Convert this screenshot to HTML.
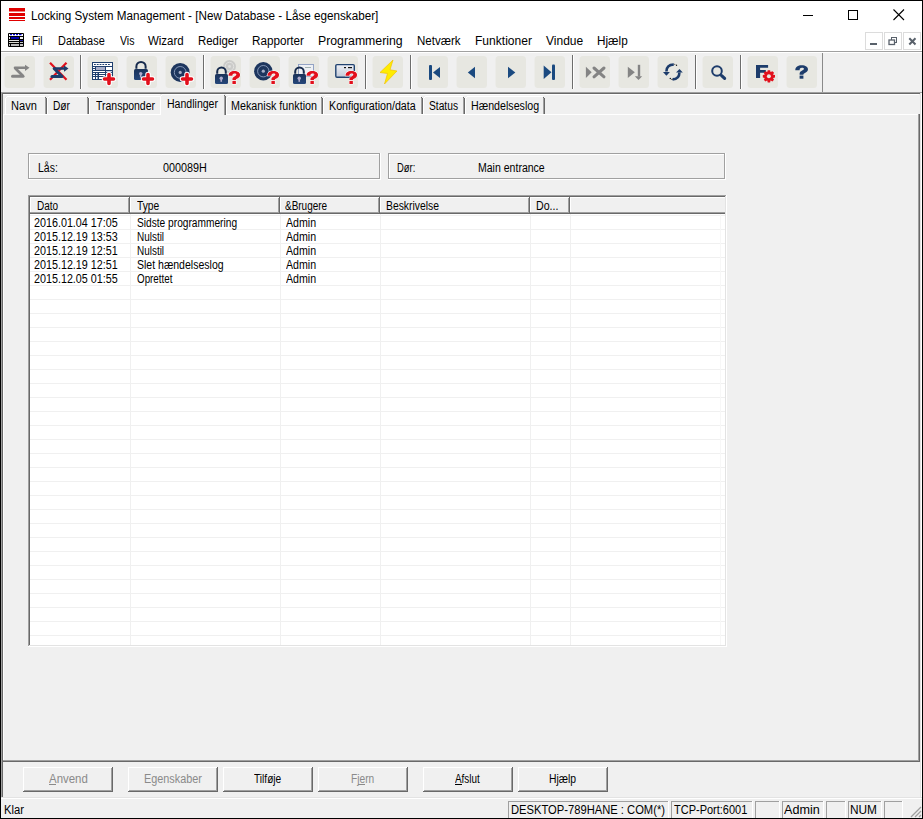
<!DOCTYPE html>
<html><head><meta charset="utf-8"><style>
html,body{margin:0;padding:0;}
body{width:923px;height:819px;overflow:hidden;position:relative;background:#f0f0f0;font-family:"Liberation Sans", sans-serif;}
body>div,body>span{position:absolute;}
body>span{white-space:pre;transform-origin:0 0;}
</style></head><body>
<div style="left:0px;top:0px;width:923px;height:51px;background:#fff;"></div>
<svg style="position:absolute;left:9px;top:8px" width="16" height="14" viewBox="0 0 16 14"><rect x="0" y="0" width="16" height="3.5" fill="#e00000"/><rect x="0" y="5" width="16" height="3" fill="#e00000"/><rect x="0" y="9" width="16" height="2" fill="#e00000"/><rect x="0" y="12" width="16" height="1" fill="#e00000"/></svg>
<div style="left:803px;top:15px;width:10px;height:1px;background:#000;"></div>
<div style="left:848px;top:10px;width:10px;height:10px;background:transparent;box-sizing:border-box;border:1px solid #000"></div>
<svg style="position:absolute;left:893px;top:9px" width="12" height="12" viewBox="0 0 12 12"><path d="M0.5 0.5 L11 11 M11 0.5 L0.5 11" stroke="#000" stroke-width="1.1"/></svg>
<svg style="position:absolute;left:8px;top:33px" width="16" height="14" viewBox="0 0 16 14"><rect width="16" height="14" rx="1" fill="#000"/><rect x="1" y="1" width="14" height="2" fill="#fff"/><rect x="2" y="1" width="2" height="1.2" fill="#0000d0"/><rect x="5" y="1" width="2" height="1.2" fill="#0000d0"/><rect x="8" y="1" width="2" height="1.2" fill="#0000d0"/><rect x="11" y="1" width="2.5" height="1.2" fill="#0000d0"/><rect x="1" y="4" width="1" height="2" fill="#e8e8f0"/><rect x="3" y="4" width="8" height="2" fill="#0000b0"/><rect x="12" y="4" width="3" height="2" fill="#f0f0f0"/><rect x="1" y="7" width="10" height="1" fill="#e0e0e0"/><rect x="12" y="7" width="3" height="1" fill="#2020a0"/><rect x="1" y="9" width="10" height="1" fill="#d8d8d0"/><rect x="12" y="9" width="3" height="1" fill="#c8c8c8"/><rect x="1" y="11" width="1" height="2" fill="#c0c0c0"/><rect x="3" y="11" width="8" height="2" fill="#b8b8b8"/><rect x="12" y="11" width="3" height="2" fill="#c0c0c0"/></svg>
<div style="left:865px;top:32px;width:18px;height:18px;background:transparent;box-sizing:border-box;border:1px solid #dcdcdc"></div>
<div style="left:884px;top:32px;width:18px;height:18px;background:transparent;box-sizing:border-box;border:1px solid #dcdcdc"></div>
<div style="left:903px;top:32px;width:18px;height:18px;background:transparent;box-sizing:border-box;border:1px solid #dcdcdc"></div>
<div style="left:870px;top:43px;width:7px;height:2px;background:#59616b;"></div>
<svg style="position:absolute;left:884px;top:32px" width="18" height="18" viewBox="0 0 18 18"><rect x="7.5" y="5.5" width="5" height="5" fill="none" stroke="#59616b" stroke-width="1"/><rect x="5" y="8" width="5.5" height="4.5" fill="#fff" stroke="#59616b" stroke-width="1.3"/></svg>
<svg style="position:absolute;left:903px;top:32px" width="18" height="18" viewBox="0 0 18 18"><path d="M6.3 6.3 L12.5 12.5 M12.5 6.3 L6.3 12.5" stroke="#59616b" stroke-width="2"/></svg>
<div style="left:1px;top:51px;width:921px;height:1px;background:#a0a0a0;"></div>
<div style="left:1px;top:52px;width:921px;height:1px;background:#ffffff;"></div>
<div style="left:1px;top:53px;width:921px;height:39px;background:#f0f0f0;"></div>
<svg style="position:absolute;left:4px;top:56px" width="32" height="32" viewBox="0 0 32 32"><rect x="0.5" y="0" width="30.5" height="32" rx="3.5" fill="#e7e7e1"/><path d="M11 11.8 H22" stroke="#848484" stroke-width="2.6" stroke-linecap="round"/><path d="M21 8.8 L25.5 11.8 L21 15 Z" fill="#848484"/><path d="M11.5 12.5 L18.5 19.5" stroke="#848484" stroke-width="2.8" stroke-linecap="round"/><path d="M8.5 20.3 H19" stroke="#848484" stroke-width="3" stroke-linecap="round"/></svg>
<svg style="position:absolute;left:43px;top:56px" width="32" height="32" viewBox="0 0 32 32"><rect x="0.5" y="0" width="30.5" height="32" rx="3.5" fill="#e7e7e1"/><path d="M7 6.8 L23.5 23.8 M23.5 6.8 L7 23.8" stroke="#e2101c" stroke-width="2.2"/><path d="M11 12.5 H22" stroke="#1d3c6b" stroke-width="2.6" stroke-linecap="round"/><path d="M21 9.5 L25.5 12.5 L21 15.8 Z" fill="#1d3c6b"/><path d="M11.5 13 L18.5 20" stroke="#1d3c6b" stroke-width="2.8" stroke-linecap="round"/><path d="M9 20.6 H19" stroke="#1d3c6b" stroke-width="3" stroke-linecap="round"/></svg>
<svg style="position:absolute;left:87px;top:56px" width="32" height="32" viewBox="0 0 32 32"><rect x="0.5" y="0" width="30.5" height="32" rx="3.5" fill="#e7e7e1"/><rect x="5" y="6" width="21" height="18" fill="#1f3f6e"/><rect x="6" y="7" width="19" height="3" fill="#fff"/><rect x="7.0" y="8" width="1.8" height="1" fill="#1f3f6e"/><rect x="9.8" y="8" width="1.8" height="1" fill="#1f3f6e"/><rect x="12.6" y="8" width="1.8" height="1" fill="#1f3f6e"/><rect x="15.399999999999999" y="8" width="1.8" height="1" fill="#1f3f6e"/><rect x="18.2" y="8" width="1.8" height="1" fill="#1f3f6e"/><rect x="21.0" y="8" width="1.8" height="1" fill="#1f3f6e"/><rect x="6" y="11" width="2" height="1" fill="#fff"/><rect x="6" y="13" width="2" height="1" fill="#fff"/><rect x="9" y="11" width="9" height="3" fill="#a8aec8"/><rect x="19" y="11" width="6" height="3" fill="#fff"/><rect x="6" y="15" width="12" height="1" fill="#fff"/><rect x="19" y="15" width="6" height="1" fill="#c8cce0"/><rect x="6" y="17" width="2" height="1" fill="#fff"/><rect x="9" y="17" width="1.5" height="1" fill="#fff"/><rect x="12" y="17" width="6" height="1" fill="#fff"/><rect x="19" y="17" width="6" height="1" fill="#fff"/><rect x="6" y="19" width="2" height="1" fill="#fff"/><rect x="9" y="19" width="1.5" height="1" fill="#fff"/><rect x="12" y="19" width="6" height="1" fill="#fff"/><rect x="19" y="19" width="6" height="1" fill="#fff"/><rect x="6" y="21" width="2" height="2" fill="#fff"/><rect x="9" y="21" width="1.5" height="2" fill="#fff"/><rect x="12" y="21" width="6" height="2" fill="#fff"/><path d="M22 18.5 V27.5 M17.5 23 H26.5" stroke="#fff" stroke-width="5.5" stroke-linecap="round"/><path d="M22 18.5 V27.5 M17.5 23 H26.5" stroke="#e2101c" stroke-width="3.6" stroke-linecap="round"/></svg>
<svg style="position:absolute;left:126px;top:56px" width="32" height="32" viewBox="0 0 32 32"><rect x="0.5" y="0" width="30.5" height="32" rx="3.5" fill="#e7e7e1"/><path d="M10.38 12.70 V10.58 A4.62 4.62 0 0 1 19.62 10.58 V12.70" fill="none" stroke="#162a4c" stroke-width="2"/><defs><linearGradient id="lg813" x1="0" y1="0" x2="0" y2="1"><stop offset="0" stop-color="#1a3258"/><stop offset="1" stop-color="#25477a"/></linearGradient></defs><rect x="8" y="13" width="14" height="11" rx="1.5" fill="url(#lg813)"/><circle cx="14.72" cy="17.62" r="1.7" fill="#b0accc"/><rect x="13.92" y="17.95" width="1.6" height="3.63" fill="#b0accc"/><path d="M22 18.5 V27.5 M17.5 23 H26.5" stroke="#fff" stroke-width="5.5" stroke-linecap="round"/><path d="M22 18.5 V27.5 M17.5 23 H26.5" stroke="#e2101c" stroke-width="3.6" stroke-linecap="round"/></svg>
<svg style="position:absolute;left:165px;top:56px" width="32" height="32" viewBox="0 0 32 32"><rect x="0.5" y="0" width="30.5" height="32" rx="3.5" fill="#e7e7e1"/><circle cx="15.2" cy="16.4" r="9.5" fill="#1d365e"/><circle cx="15.2" cy="16.4" r="5.89" fill="none" stroke="#8ea0c0" stroke-width="0.9"/><circle cx="15.2" cy="16.4" r="1.6" fill="#a8b0c8"/><path d="M22 18.5 V27.5 M17.5 23 H26.5" stroke="#fff" stroke-width="5.5" stroke-linecap="round"/><path d="M22 18.5 V27.5 M17.5 23 H26.5" stroke="#e2101c" stroke-width="3.6" stroke-linecap="round"/></svg>
<svg style="position:absolute;left:210px;top:56px" width="32" height="32" viewBox="0 0 32 32"><rect x="0.5" y="0" width="30.5" height="32" rx="3.5" fill="#e7e7e1"/><circle cx="19.5" cy="10.5" r="6.5" fill="#cbcbc9"/><circle cx="19.5" cy="10.5" r="4.2" fill="none" stroke="#e2e2e0" stroke-width="1"/><circle cx="19.5" cy="10.5" r="1.4" fill="#e2e2e0"/><path d="M7.21 17.70 V15.80 A4.29 4.29 0 0 1 15.79 15.80 V17.70" fill="none" stroke="#162a4c" stroke-width="2"/><defs><linearGradient id="lg518" x1="0" y1="0" x2="0" y2="1"><stop offset="0" stop-color="#1a3258"/><stop offset="1" stop-color="#25477a"/></linearGradient></defs><rect x="5" y="18" width="13" height="10" rx="1.5" fill="url(#lg518)"/><circle cx="11.24" cy="22.20" r="1.7" fill="#b0accc"/><rect x="10.44" y="22.50" width="1.6" height="3.30" fill="#b0accc"/><g transform="translate(18.4 15) scale(0.91 0.963) translate(-9.2 -9.2)" paint-order="stroke"><path d="M9.3 14.2 C9.3 10.8 12 9.2 15.6 9.2 C19.6 9.2 22 10.9 22 13.3 C22 15.6 20 16.5 18.6 17.2 C17.6 17.7 17.4 18.1 17.4 18.8 L13.6 18.8 L13.6 17.8 C13.6 16.2 14.6 15.5 16.2 14.6 C17.4 13.9 17.9 13.5 17.9 12.8 C17.9 12.1 17.1 11.8 15.9 11.8 C14.5 11.8 13.6 12.5 13.6 14.2 Z" fill="#e2101c" stroke="#fff" stroke-width="1.1"/><rect x="13.6" y="19.6" width="3.8" height="3.1" fill="#e2101c" stroke="#fff" stroke-width="1"/></g></svg>
<svg style="position:absolute;left:249px;top:56px" width="32" height="32" viewBox="0 0 32 32"><rect x="0.5" y="0" width="30.5" height="32" rx="3.5" fill="#e7e7e1"/><circle cx="14.3" cy="15.2" r="9.2" fill="#1d365e"/><circle cx="14.3" cy="15.2" r="5.704" fill="none" stroke="#8ea0c0" stroke-width="0.9"/><circle cx="14.3" cy="15.2" r="1.6" fill="#a8b0c8"/><g transform="translate(18.4 15) scale(0.91 0.963) translate(-9.2 -9.2)" paint-order="stroke"><path d="M9.3 14.2 C9.3 10.8 12 9.2 15.6 9.2 C19.6 9.2 22 10.9 22 13.3 C22 15.6 20 16.5 18.6 17.2 C17.6 17.7 17.4 18.1 17.4 18.8 L13.6 18.8 L13.6 17.8 C13.6 16.2 14.6 15.5 16.2 14.6 C17.4 13.9 17.9 13.5 17.9 12.8 C17.9 12.1 17.1 11.8 15.9 11.8 C14.5 11.8 13.6 12.5 13.6 14.2 Z" fill="#e2101c" stroke="#fff" stroke-width="1.1"/><rect x="13.6" y="19.6" width="3.8" height="3.1" fill="#e2101c" stroke="#fff" stroke-width="1"/></g></svg>
<svg style="position:absolute;left:288px;top:56px" width="32" height="32" viewBox="0 0 32 32"><rect x="0.5" y="0" width="30.5" height="32" rx="3.5" fill="#e7e7e1"/><rect x="10.5" y="8.5" width="15" height="12" fill="#eef0f4" stroke="#8a9cc0" stroke-width="0.9"/><rect x="17" y="11" width="6" height="0.9" fill="#9aa"/><path d="M7.21 17.70 V15.80 A4.29 4.29 0 0 1 15.79 15.80 V17.70" fill="none" stroke="#162a4c" stroke-width="2"/><defs><linearGradient id="lg518" x1="0" y1="0" x2="0" y2="1"><stop offset="0" stop-color="#1a3258"/><stop offset="1" stop-color="#25477a"/></linearGradient></defs><rect x="5" y="18" width="13" height="10" rx="1.5" fill="url(#lg518)"/><circle cx="11.24" cy="22.20" r="1.7" fill="#b0accc"/><rect x="10.44" y="22.50" width="1.6" height="3.30" fill="#b0accc"/><g transform="translate(18.4 15) scale(0.91 0.963) translate(-9.2 -9.2)" paint-order="stroke"><path d="M9.3 14.2 C9.3 10.8 12 9.2 15.6 9.2 C19.6 9.2 22 10.9 22 13.3 C22 15.6 20 16.5 18.6 17.2 C17.6 17.7 17.4 18.1 17.4 18.8 L13.6 18.8 L13.6 17.8 C13.6 16.2 14.6 15.5 16.2 14.6 C17.4 13.9 17.9 13.5 17.9 12.8 C17.9 12.1 17.1 11.8 15.9 11.8 C14.5 11.8 13.6 12.5 13.6 14.2 Z" fill="#e2101c" stroke="#fff" stroke-width="1.1"/><rect x="13.6" y="19.6" width="3.8" height="3.1" fill="#e2101c" stroke="#fff" stroke-width="1"/></g></svg>
<svg style="position:absolute;left:327px;top:56px" width="32" height="32" viewBox="0 0 32 32"><rect x="0.5" y="0" width="30.5" height="32" rx="3.5" fill="#e7e7e1"/><defs><linearGradient id="wg" x1="0" y1="0" x2="0" y2="1"><stop offset="0" stop-color="#eef0f6"/><stop offset="1" stop-color="#c2cad8"/></linearGradient></defs><rect x="8.8" y="8.6" width="18.5" height="12.6" rx="1.2" fill="url(#wg)" stroke="#1f4270" stroke-width="1.4"/><rect x="17" y="11" width="2" height="1.2" fill="#111"/><rect x="21" y="11" width="4" height="1.2" fill="#111"/><g transform="translate(18.4 15) scale(0.91 0.963) translate(-9.2 -9.2)" paint-order="stroke"><path d="M9.3 14.2 C9.3 10.8 12 9.2 15.6 9.2 C19.6 9.2 22 10.9 22 13.3 C22 15.6 20 16.5 18.6 17.2 C17.6 17.7 17.4 18.1 17.4 18.8 L13.6 18.8 L13.6 17.8 C13.6 16.2 14.6 15.5 16.2 14.6 C17.4 13.9 17.9 13.5 17.9 12.8 C17.9 12.1 17.1 11.8 15.9 11.8 C14.5 11.8 13.6 12.5 13.6 14.2 Z" fill="#e2101c" stroke="#fff" stroke-width="1.1"/><rect x="13.6" y="19.6" width="3.8" height="3.1" fill="#e2101c" stroke="#fff" stroke-width="1"/></g></svg>
<svg style="position:absolute;left:372px;top:56px" width="32" height="32" viewBox="0 0 32 32"><rect x="0.5" y="0" width="30.5" height="32" rx="3.5" fill="#e7e7e1"/><path d="M21 4 L8 16.5 L15.5 17.5 L12.5 28 L25 15 L18 13.8 Z" fill="#ffec00" stroke="#f2c200" stroke-width="0.7" stroke-linejoin="round"/></svg>
<svg style="position:absolute;left:417px;top:56px" width="32" height="32" viewBox="0 0 32 32"><rect x="0.5" y="0" width="30.5" height="32" rx="3.5" fill="#e7e7e1"/><rect x="12" y="9" width="3" height="15" rx="1" fill="#1b4a80"/><path d="M16 16.4 L23 11 L23 22 Z" fill="#1b4a80"/></svg>
<svg style="position:absolute;left:456px;top:56px" width="32" height="32" viewBox="0 0 32 32"><rect x="0.5" y="0" width="30.5" height="32" rx="3.5" fill="#e7e7e1"/><path d="M11.8 16.4 L19 10.7 L19 22.2 Z" fill="#1b4a80"/></svg>
<svg style="position:absolute;left:495px;top:56px" width="32" height="32" viewBox="0 0 32 32"><rect x="0.5" y="0" width="30.5" height="32" rx="3.5" fill="#e7e7e1"/><path d="M20.3 16.4 L13 10.7 L13 22.2 Z" fill="#1b4a80"/></svg>
<svg style="position:absolute;left:534px;top:56px" width="32" height="32" viewBox="0 0 32 32"><rect x="0.5" y="0" width="30.5" height="32" rx="3.5" fill="#e7e7e1"/><path d="M17.5 16.2 L9.7 9.5 L9.7 23 Z" fill="#1b4a80"/><rect x="18" y="8.5" width="3" height="15.5" rx="1" fill="#1b4a80"/></svg>
<svg style="position:absolute;left:579px;top:56px" width="32" height="32" viewBox="0 0 32 32"><rect x="0.5" y="0" width="30.5" height="32" rx="3.5" fill="#e7e7e1"/><path d="M12.7 16.3 L6.9 10.8 L6.9 21.9 Z" fill="#848484"/><path d="M15 12 L25 20.8 M25 12 L15 20.8" stroke="#848484" stroke-width="3" stroke-linecap="round"/></svg>
<svg style="position:absolute;left:618px;top:56px" width="32" height="32" viewBox="0 0 32 32"><rect x="0.5" y="0" width="30.5" height="32" rx="3.5" fill="#e7e7e1"/><path d="M16.8 16.3 L9.8 10.8 L9.8 21.9 Z" fill="#848484"/><path d="M21 8.8 V20.5" stroke="#848484" stroke-width="2.4"/><path d="M16.8 20.2 L24.2 20.2 L20.5 24 Z" fill="#848484"/></svg>
<svg style="position:absolute;left:657px;top:56px" width="32" height="32" viewBox="0 0 32 32"><rect x="0.5" y="0" width="30.5" height="32" rx="3.5" fill="#e7e7e1"/><path d="M16.8 8.5 C12.5 8.6 9.5 11 9.4 15.5" fill="none" stroke="#1d3c6b" stroke-width="2.6"/><path d="M6 16 L12.9 16 L9.4 19.8 Z" fill="#1d3c6b"/><path d="M15.6 23.4 C19.8 23.2 22.4 20.6 22.4 16.5" fill="none" stroke="#1d3c6b" stroke-width="2.6"/><path d="M19 16.6 L25.8 16.6 L22.5 13 Z" fill="#1d3c6b"/><circle cx="19.5" cy="9.3" r="0.7" fill="#111"/><circle cx="17.8" cy="8.3" r="0.5" fill="#111"/><circle cx="13.3" cy="22.5" r="0.7" fill="#111"/><circle cx="15" cy="23.4" r="0.6" fill="#111"/></svg>
<svg style="position:absolute;left:702px;top:56px" width="32" height="32" viewBox="0 0 32 32"><rect x="0.5" y="0" width="30.5" height="32" rx="3.5" fill="#e7e7e1"/><circle cx="15" cy="15" r="4.8" fill="none" stroke="#1d3c6b" stroke-width="2"/><path d="M19.6 19.6 L22.6 22.4" stroke="#1d3c6b" stroke-width="3.2" stroke-linecap="round"/></svg>
<svg style="position:absolute;left:747px;top:56px" width="32" height="32" viewBox="0 0 32 32"><rect x="0.5" y="0" width="30.5" height="32" rx="3.5" fill="#e7e7e1"/><path d="M9 9 H21.1 V11.7 H13.1 V14 H18.8 V16.8 H13.1 V21.9 H9 Z" fill="#1d3c6b"/><path d="M26.19 18.65 L27.99 19.12 L27.99 21.48 L26.19 21.95 L26.10 22.17 L27.04 23.77 L25.37 25.44 L23.77 24.50 L23.55 24.59 L23.08 26.39 L20.72 26.39 L20.25 24.59 L20.03 24.50 L18.43 25.44 L16.76 23.77 L17.70 22.17 L17.61 21.95 L15.81 21.48 L15.81 19.12 L17.61 18.65 L17.70 18.43 L16.76 16.83 L18.43 15.16 L20.03 16.10 L20.25 16.01 L20.72 14.21 L23.08 14.21 L23.55 16.01 L23.77 16.10 L25.37 15.16 L27.04 16.83 L26.10 18.43 Z" fill="#e2101c"/><circle cx="21.9" cy="20.3" r="2" fill="#e7e7e1"/></svg>
<svg style="position:absolute;left:786px;top:56px" width="32" height="32" viewBox="0 0 32 32"><rect x="0.5" y="0" width="30.5" height="32" rx="3.5" fill="#e7e7e1"/><path d="M9.3 14.2 C9.3 10.8 12 9.2 15.6 9.2 C19.6 9.2 22 10.9 22 13.3 C22 15.6 20 16.5 18.6 17.2 C17.6 17.7 17.4 18.1 17.4 18.8 L13.6 18.8 L13.6 17.8 C13.6 16.2 14.6 15.5 16.2 14.6 C17.4 13.9 17.9 13.5 17.9 12.8 C17.9 12.1 17.1 11.8 15.9 11.8 C14.5 11.8 13.6 12.5 13.6 14.2 Z" fill="#1d3c6b"/><rect x="13.6" y="19.6" width="3.8" height="3.1" fill="#1d3c6b"/></svg>
<div style="left:80px;top:55px;width:1px;height:34px;background:#6d6d6d;"></div>
<div style="left:81px;top:55px;width:1px;height:34px;background:#fff;"></div>
<div style="left:203px;top:55px;width:1px;height:34px;background:#6d6d6d;"></div>
<div style="left:204px;top:55px;width:1px;height:34px;background:#fff;"></div>
<div style="left:365px;top:55px;width:1px;height:34px;background:#6d6d6d;"></div>
<div style="left:366px;top:55px;width:1px;height:34px;background:#fff;"></div>
<div style="left:410px;top:55px;width:1px;height:34px;background:#6d6d6d;"></div>
<div style="left:411px;top:55px;width:1px;height:34px;background:#fff;"></div>
<div style="left:572px;top:55px;width:1px;height:34px;background:#6d6d6d;"></div>
<div style="left:573px;top:55px;width:1px;height:34px;background:#fff;"></div>
<div style="left:695px;top:55px;width:1px;height:34px;background:#6d6d6d;"></div>
<div style="left:696px;top:55px;width:1px;height:34px;background:#fff;"></div>
<div style="left:740px;top:55px;width:1px;height:34px;background:#6d6d6d;"></div>
<div style="left:741px;top:55px;width:1px;height:34px;background:#fff;"></div>
<div style="left:822px;top:53px;width:1px;height:39px;background:#8a8a8a;"></div>
<div style="left:0px;top:92px;width:923px;height:1px;background:#a0a0a0;"></div>
<div style="left:0px;top:93px;width:923px;height:1px;background:#696969;"></div>
<div style="left:1px;top:93px;width:1px;height:704px;background:#a0a0a0;"></div>
<div style="left:2px;top:93px;width:1px;height:704px;background:#696969;"></div>
<div style="left:920px;top:93px;width:1px;height:704px;background:#e3e3e3;"></div>
<div style="left:921px;top:93px;width:1px;height:704px;background:#fff;"></div>
<div style="left:1px;top:797px;width:921px;height:1px;background:#e3e3e3;"></div>
<div style="left:3px;top:94px;width:916px;height:1px;background:#fff;"></div>
<div style="left:3px;top:114px;width:917px;height:1px;background:#fff;"></div>
<div style="left:3px;top:114px;width:1px;height:647px;background:#fff;"></div>
<div style="left:918px;top:114px;width:1px;height:647px;background:#a0a0a0;"></div>
<div style="left:919px;top:114px;width:1px;height:648px;background:#696969;"></div>
<div style="left:3px;top:760px;width:916px;height:1px;background:#a0a0a0;"></div>
<div style="left:3px;top:761px;width:917px;height:1px;background:#696969;"></div>
<div style="left:5px;top:98px;width:1px;height:16px;background:#fff;"></div>
<div style="left:6px;top:97px;width:1px;height:1px;background:#fff;"></div>
<div style="left:7px;top:96px;width:38px;height:1px;background:#fff;"></div>
<div style="left:45px;top:97px;width:1px;height:1px;background:#696969;"></div>
<div style="left:46px;top:98px;width:1px;height:16px;background:#696969;"></div>
<div style="left:45px;top:98px;width:1px;height:16px;background:#a0a0a0;"></div>
<div style="left:47px;top:98px;width:1px;height:16px;background:#fff;"></div>
<div style="left:48px;top:97px;width:1px;height:1px;background:#fff;"></div>
<div style="left:49px;top:96px;width:38px;height:1px;background:#fff;"></div>
<div style="left:87px;top:97px;width:1px;height:1px;background:#696969;"></div>
<div style="left:88px;top:98px;width:1px;height:16px;background:#696969;"></div>
<div style="left:87px;top:98px;width:1px;height:16px;background:#a0a0a0;"></div>
<div style="left:89px;top:98px;width:1px;height:16px;background:#fff;"></div>
<div style="left:90px;top:97px;width:1px;height:1px;background:#fff;"></div>
<div style="left:91px;top:96px;width:69px;height:1px;background:#fff;"></div>
<div style="left:160px;top:97px;width:1px;height:1px;background:#696969;"></div>
<div style="left:161px;top:98px;width:1px;height:16px;background:#696969;"></div>
<div style="left:160px;top:98px;width:1px;height:16px;background:#a0a0a0;"></div>
<div style="left:226px;top:98px;width:1px;height:16px;background:#fff;"></div>
<div style="left:227px;top:97px;width:1px;height:1px;background:#fff;"></div>
<div style="left:228px;top:96px;width:93px;height:1px;background:#fff;"></div>
<div style="left:321px;top:97px;width:1px;height:1px;background:#696969;"></div>
<div style="left:322px;top:98px;width:1px;height:16px;background:#696969;"></div>
<div style="left:321px;top:98px;width:1px;height:16px;background:#a0a0a0;"></div>
<div style="left:323px;top:98px;width:1px;height:16px;background:#fff;"></div>
<div style="left:324px;top:97px;width:1px;height:1px;background:#fff;"></div>
<div style="left:325px;top:96px;width:96px;height:1px;background:#fff;"></div>
<div style="left:421px;top:97px;width:1px;height:1px;background:#696969;"></div>
<div style="left:422px;top:98px;width:1px;height:16px;background:#696969;"></div>
<div style="left:421px;top:98px;width:1px;height:16px;background:#a0a0a0;"></div>
<div style="left:423px;top:98px;width:1px;height:16px;background:#fff;"></div>
<div style="left:424px;top:97px;width:1px;height:1px;background:#fff;"></div>
<div style="left:425px;top:96px;width:38px;height:1px;background:#fff;"></div>
<div style="left:463px;top:97px;width:1px;height:1px;background:#696969;"></div>
<div style="left:464px;top:98px;width:1px;height:16px;background:#696969;"></div>
<div style="left:463px;top:98px;width:1px;height:16px;background:#a0a0a0;"></div>
<div style="left:465px;top:98px;width:1px;height:16px;background:#fff;"></div>
<div style="left:466px;top:97px;width:1px;height:1px;background:#fff;"></div>
<div style="left:467px;top:96px;width:76px;height:1px;background:#fff;"></div>
<div style="left:543px;top:97px;width:1px;height:1px;background:#696969;"></div>
<div style="left:544px;top:98px;width:1px;height:16px;background:#696969;"></div>
<div style="left:543px;top:98px;width:1px;height:16px;background:#a0a0a0;"></div>
<div style="left:160px;top:94px;width:66px;height:21px;background:#f0f0f0;"></div>
<div style="left:160px;top:96px;width:1px;height:19px;background:#fff;"></div>
<div style="left:161px;top:95px;width:1px;height:1px;background:#fff;"></div>
<div style="left:162px;top:94px;width:62px;height:1px;background:#fff;"></div>
<div style="left:224px;top:95px;width:1px;height:1px;background:#696969;"></div>
<div style="left:225px;top:96px;width:1px;height:19px;background:#696969;"></div>
<div style="left:224px;top:96px;width:1px;height:19px;background:#a0a0a0;"></div>
<div style="left:28px;top:153px;width:352px;height:1px;background:#a0a0a0;"></div>
<div style="left:28px;top:153px;width:1px;height:26px;background:#a0a0a0;"></div>
<div style="left:379px;top:153px;width:1px;height:26px;background:#a0a0a0;"></div>
<div style="left:28px;top:178px;width:352px;height:1px;background:#a0a0a0;"></div>
<div style="left:29px;top:154px;width:350px;height:1px;background:#fff;"></div>
<div style="left:29px;top:154px;width:1px;height:24px;background:#fff;"></div>
<div style="left:380px;top:153px;width:1px;height:27px;background:#fff;"></div>
<div style="left:28px;top:179px;width:353px;height:1px;background:#fff;"></div>
<div style="left:388px;top:153px;width:337px;height:1px;background:#a0a0a0;"></div>
<div style="left:388px;top:153px;width:1px;height:26px;background:#a0a0a0;"></div>
<div style="left:724px;top:153px;width:1px;height:26px;background:#a0a0a0;"></div>
<div style="left:388px;top:178px;width:337px;height:1px;background:#a0a0a0;"></div>
<div style="left:389px;top:154px;width:335px;height:1px;background:#fff;"></div>
<div style="left:389px;top:154px;width:1px;height:24px;background:#fff;"></div>
<div style="left:725px;top:153px;width:1px;height:27px;background:#fff;"></div>
<div style="left:388px;top:179px;width:338px;height:1px;background:#fff;"></div>
<div style="left:28px;top:195px;width:699px;height:452px;background:#fff;"></div>
<div style="left:28px;top:195px;width:698px;height:1px;background:#a0a0a0;"></div>
<div style="left:28px;top:195px;width:1px;height:451px;background:#a0a0a0;"></div>
<div style="left:29px;top:196px;width:696px;height:1px;background:#696969;"></div>
<div style="left:29px;top:196px;width:1px;height:449px;background:#696969;"></div>
<div style="left:725px;top:196px;width:1px;height:450px;background:#e3e3e3;"></div>
<div style="left:29px;top:645px;width:697px;height:1px;background:#e3e3e3;"></div>
<div style="left:30px;top:197px;width:695px;height:16px;background:#f0f0f0;"></div>
<div style="left:30px;top:197px;width:695px;height:1px;background:#fff;"></div>
<div style="left:30px;top:212px;width:695px;height:1px;background:#a0a0a0;"></div>
<div style="left:30px;top:213px;width:695px;height:1px;background:#696969;"></div>
<div style="left:30px;top:197px;width:1px;height:15px;background:#fff;"></div>
<div style="left:128px;top:198px;width:1px;height:14px;background:#a0a0a0;"></div>
<div style="left:129px;top:197px;width:1px;height:16px;background:#696969;"></div>
<div style="left:130px;top:197px;width:1px;height:15px;background:#fff;"></div>
<div style="left:278px;top:198px;width:1px;height:14px;background:#a0a0a0;"></div>
<div style="left:279px;top:197px;width:1px;height:16px;background:#696969;"></div>
<div style="left:280px;top:197px;width:1px;height:15px;background:#fff;"></div>
<div style="left:378px;top:198px;width:1px;height:14px;background:#a0a0a0;"></div>
<div style="left:379px;top:197px;width:1px;height:16px;background:#696969;"></div>
<div style="left:380px;top:197px;width:1px;height:15px;background:#fff;"></div>
<div style="left:528px;top:198px;width:1px;height:14px;background:#a0a0a0;"></div>
<div style="left:529px;top:197px;width:1px;height:16px;background:#696969;"></div>
<div style="left:530px;top:197px;width:1px;height:15px;background:#fff;"></div>
<div style="left:568px;top:198px;width:1px;height:14px;background:#a0a0a0;"></div>
<div style="left:569px;top:197px;width:1px;height:16px;background:#696969;"></div>
<div style="left:570px;top:197px;width:1px;height:15px;background:#fff;"></div>
<div style="left:30px;top:229px;width:695px;height:1px;background:#f0f0f0;"></div>
<div style="left:30px;top:243px;width:695px;height:1px;background:#f0f0f0;"></div>
<div style="left:30px;top:257px;width:695px;height:1px;background:#f0f0f0;"></div>
<div style="left:30px;top:271px;width:695px;height:1px;background:#f0f0f0;"></div>
<div style="left:30px;top:285px;width:695px;height:1px;background:#f0f0f0;"></div>
<div style="left:30px;top:299px;width:695px;height:1px;background:#f0f0f0;"></div>
<div style="left:30px;top:313px;width:695px;height:1px;background:#f0f0f0;"></div>
<div style="left:30px;top:327px;width:695px;height:1px;background:#f0f0f0;"></div>
<div style="left:30px;top:341px;width:695px;height:1px;background:#f0f0f0;"></div>
<div style="left:30px;top:355px;width:695px;height:1px;background:#f0f0f0;"></div>
<div style="left:30px;top:369px;width:695px;height:1px;background:#f0f0f0;"></div>
<div style="left:30px;top:383px;width:695px;height:1px;background:#f0f0f0;"></div>
<div style="left:30px;top:397px;width:695px;height:1px;background:#f0f0f0;"></div>
<div style="left:30px;top:411px;width:695px;height:1px;background:#f0f0f0;"></div>
<div style="left:30px;top:425px;width:695px;height:1px;background:#f0f0f0;"></div>
<div style="left:30px;top:439px;width:695px;height:1px;background:#f0f0f0;"></div>
<div style="left:30px;top:453px;width:695px;height:1px;background:#f0f0f0;"></div>
<div style="left:30px;top:467px;width:695px;height:1px;background:#f0f0f0;"></div>
<div style="left:30px;top:481px;width:695px;height:1px;background:#f0f0f0;"></div>
<div style="left:30px;top:495px;width:695px;height:1px;background:#f0f0f0;"></div>
<div style="left:30px;top:509px;width:695px;height:1px;background:#f0f0f0;"></div>
<div style="left:30px;top:523px;width:695px;height:1px;background:#f0f0f0;"></div>
<div style="left:30px;top:537px;width:695px;height:1px;background:#f0f0f0;"></div>
<div style="left:30px;top:551px;width:695px;height:1px;background:#f0f0f0;"></div>
<div style="left:30px;top:565px;width:695px;height:1px;background:#f0f0f0;"></div>
<div style="left:30px;top:579px;width:695px;height:1px;background:#f0f0f0;"></div>
<div style="left:30px;top:593px;width:695px;height:1px;background:#f0f0f0;"></div>
<div style="left:30px;top:607px;width:695px;height:1px;background:#f0f0f0;"></div>
<div style="left:30px;top:621px;width:695px;height:1px;background:#f0f0f0;"></div>
<div style="left:30px;top:635px;width:695px;height:1px;background:#f0f0f0;"></div>
<div style="left:30px;top:215px;width:695px;height:1px;background:#f0f0f0;"></div>
<div style="left:130px;top:214px;width:1px;height:431px;background:#f0f0f0;"></div>
<div style="left:280px;top:214px;width:1px;height:431px;background:#f0f0f0;"></div>
<div style="left:380px;top:214px;width:1px;height:431px;background:#f0f0f0;"></div>
<div style="left:530px;top:214px;width:1px;height:431px;background:#f0f0f0;"></div>
<div style="left:570px;top:214px;width:1px;height:431px;background:#f0f0f0;"></div>
<div style="left:720px;top:214px;width:1px;height:431px;background:#f7f7f7;"></div>
<div style="left:23px;top:767px;width:90px;height:25px;background:#f0f0f0;"></div>
<div style="left:23px;top:767px;width:89px;height:1px;background:#fff;"></div>
<div style="left:23px;top:767px;width:1px;height:24px;background:#fff;"></div>
<div style="left:112px;top:767px;width:1px;height:25px;background:#696969;"></div>
<div style="left:23px;top:791px;width:90px;height:1px;background:#696969;"></div>
<div style="left:111px;top:768px;width:1px;height:23px;background:#a0a0a0;"></div>
<div style="left:24px;top:790px;width:88px;height:1px;background:#a0a0a0;"></div>
<div style="left:128px;top:767px;width:90px;height:25px;background:#f0f0f0;"></div>
<div style="left:128px;top:767px;width:89px;height:1px;background:#fff;"></div>
<div style="left:128px;top:767px;width:1px;height:24px;background:#fff;"></div>
<div style="left:217px;top:767px;width:1px;height:25px;background:#696969;"></div>
<div style="left:128px;top:791px;width:90px;height:1px;background:#696969;"></div>
<div style="left:216px;top:768px;width:1px;height:23px;background:#a0a0a0;"></div>
<div style="left:129px;top:790px;width:88px;height:1px;background:#a0a0a0;"></div>
<div style="left:223px;top:767px;width:90px;height:25px;background:#f0f0f0;"></div>
<div style="left:223px;top:767px;width:89px;height:1px;background:#fff;"></div>
<div style="left:223px;top:767px;width:1px;height:24px;background:#fff;"></div>
<div style="left:312px;top:767px;width:1px;height:25px;background:#696969;"></div>
<div style="left:223px;top:791px;width:90px;height:1px;background:#696969;"></div>
<div style="left:311px;top:768px;width:1px;height:23px;background:#a0a0a0;"></div>
<div style="left:224px;top:790px;width:88px;height:1px;background:#a0a0a0;"></div>
<div style="left:318px;top:767px;width:90px;height:25px;background:#f0f0f0;"></div>
<div style="left:318px;top:767px;width:89px;height:1px;background:#fff;"></div>
<div style="left:318px;top:767px;width:1px;height:24px;background:#fff;"></div>
<div style="left:407px;top:767px;width:1px;height:25px;background:#696969;"></div>
<div style="left:318px;top:791px;width:90px;height:1px;background:#696969;"></div>
<div style="left:406px;top:768px;width:1px;height:23px;background:#a0a0a0;"></div>
<div style="left:319px;top:790px;width:88px;height:1px;background:#a0a0a0;"></div>
<div style="left:423px;top:767px;width:90px;height:25px;background:#f0f0f0;"></div>
<div style="left:423px;top:767px;width:89px;height:1px;background:#fff;"></div>
<div style="left:423px;top:767px;width:1px;height:24px;background:#fff;"></div>
<div style="left:512px;top:767px;width:1px;height:25px;background:#696969;"></div>
<div style="left:423px;top:791px;width:90px;height:1px;background:#696969;"></div>
<div style="left:511px;top:768px;width:1px;height:23px;background:#a0a0a0;"></div>
<div style="left:424px;top:790px;width:88px;height:1px;background:#a0a0a0;"></div>
<div style="left:518px;top:767px;width:90px;height:25px;background:#f0f0f0;"></div>
<div style="left:518px;top:767px;width:89px;height:1px;background:#fff;"></div>
<div style="left:518px;top:767px;width:1px;height:24px;background:#fff;"></div>
<div style="left:607px;top:767px;width:1px;height:25px;background:#696969;"></div>
<div style="left:518px;top:791px;width:90px;height:1px;background:#696969;"></div>
<div style="left:606px;top:768px;width:1px;height:23px;background:#a0a0a0;"></div>
<div style="left:519px;top:790px;width:88px;height:1px;background:#a0a0a0;"></div>
<div style="left:49px;top:784px;width:7px;height:1px;background:#8a8a8a;"></div>
<div style="left:358px;top:784px;width:7px;height:1px;background:#8a8a8a;"></div>
<div style="left:455px;top:784px;width:7px;height:1px;background:#000;"></div>
<div style="left:1px;top:798px;width:921px;height:20px;background:#f0f0f0;"></div>
<div style="left:1px;top:798px;width:921px;height:1px;background:#fff;"></div>
<div style="left:508px;top:801px;width:160px;height:1px;background:#a0a0a0;"></div>
<div style="left:508px;top:801px;width:1px;height:17px;background:#a0a0a0;"></div>
<div style="left:668px;top:801px;width:1px;height:17px;background:#fff;"></div>
<div style="left:671px;top:801px;width:81px;height:1px;background:#a0a0a0;"></div>
<div style="left:671px;top:801px;width:1px;height:17px;background:#a0a0a0;"></div>
<div style="left:752px;top:801px;width:1px;height:17px;background:#fff;"></div>
<div style="left:755px;top:801px;width:24px;height:1px;background:#a0a0a0;"></div>
<div style="left:755px;top:801px;width:1px;height:17px;background:#a0a0a0;"></div>
<div style="left:779px;top:801px;width:1px;height:17px;background:#fff;"></div>
<div style="left:782px;top:801px;width:41px;height:1px;background:#a0a0a0;"></div>
<div style="left:782px;top:801px;width:1px;height:17px;background:#a0a0a0;"></div>
<div style="left:823px;top:801px;width:1px;height:17px;background:#fff;"></div>
<div style="left:826px;top:801px;width:19px;height:1px;background:#a0a0a0;"></div>
<div style="left:826px;top:801px;width:1px;height:17px;background:#a0a0a0;"></div>
<div style="left:845px;top:801px;width:1px;height:17px;background:#fff;"></div>
<div style="left:848px;top:801px;width:33px;height:1px;background:#a0a0a0;"></div>
<div style="left:848px;top:801px;width:1px;height:17px;background:#a0a0a0;"></div>
<div style="left:881px;top:801px;width:1px;height:17px;background:#fff;"></div>
<div style="left:884px;top:801px;width:18px;height:1px;background:#a0a0a0;"></div>
<div style="left:884px;top:801px;width:1px;height:17px;background:#a0a0a0;"></div>
<div style="left:902px;top:801px;width:1px;height:17px;background:#fff;"></div>
<svg style="position:absolute;left:908px;top:804px" width="14" height="14" viewBox="0 0 14 14"><path d="M13 3 L3 13 M13 7 L7 13 M13 11 L11 13" stroke="#a0a0a0" stroke-width="1.3"/></svg>
<div style="left:0px;top:0px;width:923px;height:1px;background:#000;"></div>
<div style="left:0px;top:0px;width:1px;height:819px;background:#000;"></div>
<div style="left:922px;top:0px;width:1px;height:819px;background:#000;"></div>
<div style="left:0px;top:818px;width:923px;height:1px;background:#000;"></div>
<span style="left:31.00px;top:10px;font-size:12px;line-height:12px;color:#000;transform:scaleX(0.9733);">Locking System Management - [New Database - Låse egenskaber]</span>
<span style="left:32.00px;top:35px;font-size:12px;line-height:12px;color:#000;transform:scaleX(0.8336);">Fil</span>
<span style="left:58.00px;top:35px;font-size:12px;line-height:12px;color:#000;transform:scaleX(0.9092);">Database</span>
<span style="left:119.50px;top:35px;font-size:12px;line-height:12px;color:#000;transform:scaleX(0.8813);">Vis</span>
<span style="left:148.00px;top:35px;font-size:12px;line-height:12px;color:#000;transform:scaleX(0.9547);">Wizard</span>
<span style="left:198.00px;top:35px;font-size:12px;line-height:12px;color:#000;transform:scaleX(0.9518);">Rediger</span>
<span style="left:252.00px;top:35px;font-size:12px;line-height:12px;color:#000;transform:scaleX(0.9744);">Rapporter</span>
<span style="left:318.00px;top:35px;font-size:12px;line-height:12px;color:#000;transform:scaleX(1.0241);">Programmering</span>
<span style="left:416.50px;top:35px;font-size:12px;line-height:12px;color:#000;transform:scaleX(0.9603);">Netværk</span>
<span style="left:475.00px;top:35px;font-size:12px;line-height:12px;color:#000;transform:scaleX(1.0053);">Funktioner</span>
<span style="left:546.00px;top:35px;font-size:12px;line-height:12px;color:#000;">Vindue</span>
<span style="left:597.00px;top:35px;font-size:12px;line-height:12px;color:#000;transform:scaleX(0.9789);">Hjælp</span>
<span style="left:11.20px;top:100px;font-size:12px;line-height:12px;color:#000;transform:scaleX(0.9217);">Navn</span>
<span style="left:53.00px;top:100px;font-size:12px;line-height:12px;color:#000;transform:scaleX(0.8502);">Dør</span>
<span style="left:95.60px;top:100px;font-size:12px;line-height:12px;color:#000;transform:scaleX(0.8728);">Transponder</span>
<span style="left:230.60px;top:100px;font-size:12px;line-height:12px;color:#000;transform:scaleX(0.8954);">Mekanisk funktion</span>
<span style="left:329.00px;top:100px;font-size:12px;line-height:12px;color:#000;transform:scaleX(0.8902);">Konfiguration/data</span>
<span style="left:429.00px;top:100px;font-size:12px;line-height:12px;color:#000;transform:scaleX(0.8525);">Status</span>
<span style="left:471.00px;top:100px;font-size:12px;line-height:12px;color:#000;transform:scaleX(0.8877);">Hændelseslog</span>
<span style="left:167.00px;top:98px;font-size:12px;line-height:12px;color:#000;transform:scaleX(0.8787);">Handlinger</span>
<span style="left:38.00px;top:162px;font-size:12px;line-height:12px;color:#000;transform:scaleX(0.8726);">Lås:</span>
<span style="left:163.20px;top:162px;font-size:12px;line-height:12px;color:#000;transform:scaleX(0.8992);">000089H</span>
<span style="left:397.00px;top:162px;font-size:12px;line-height:12px;color:#000;transform:scaleX(0.7829);">Dør:</span>
<span style="left:478.20px;top:162px;font-size:12px;line-height:12px;color:#000;transform:scaleX(0.8773);">Main entrance</span>
<span style="left:36.50px;top:200px;font-size:12px;line-height:12px;color:#000;transform:scaleX(0.8335);">Dato</span>
<span style="left:136.50px;top:200px;font-size:12px;line-height:12px;color:#000;transform:scaleX(0.8542);">Type</span>
<span style="left:285.40px;top:200px;font-size:12px;line-height:12px;color:#000;transform:scaleX(0.8310);">&amp;Brugere</span>
<span style="left:386.00px;top:200px;font-size:12px;line-height:12px;color:#000;transform:scaleX(0.8641);">Beskrivelse</span>
<span style="left:536.30px;top:200px;font-size:12px;line-height:12px;color:#000;transform:scaleX(0.8837);">Do...</span>
<span style="left:34.00px;top:217px;font-size:12px;line-height:12px;color:#000;transform:scaleX(0.8960);">2016.01.04 17:05</span>
<span style="left:136.50px;top:217px;font-size:12px;line-height:12px;color:#000;transform:scaleX(0.8477);">Sidste programmering</span>
<span style="left:286.00px;top:217px;font-size:12px;line-height:12px;color:#000;transform:scaleX(0.8848);">Admin</span>
<span style="left:34.00px;top:231px;font-size:12px;line-height:12px;color:#000;transform:scaleX(0.8960);">2015.12.19 13:53</span>
<span style="left:136.50px;top:231px;font-size:12px;line-height:12px;color:#000;transform:scaleX(0.8280);">Nulstil</span>
<span style="left:286.00px;top:231px;font-size:12px;line-height:12px;color:#000;transform:scaleX(0.8848);">Admin</span>
<span style="left:34.00px;top:245px;font-size:12px;line-height:12px;color:#000;transform:scaleX(0.8960);">2015.12.19 12:51</span>
<span style="left:136.50px;top:245px;font-size:12px;line-height:12px;color:#000;transform:scaleX(0.8280);">Nulstil</span>
<span style="left:286.00px;top:245px;font-size:12px;line-height:12px;color:#000;transform:scaleX(0.8848);">Admin</span>
<span style="left:34.00px;top:259px;font-size:12px;line-height:12px;color:#000;transform:scaleX(0.8960);">2015.12.19 12:51</span>
<span style="left:136.50px;top:259px;font-size:12px;line-height:12px;color:#000;transform:scaleX(0.8770);">Slet hændelseslog</span>
<span style="left:286.00px;top:259px;font-size:12px;line-height:12px;color:#000;transform:scaleX(0.8848);">Admin</span>
<span style="left:34.00px;top:273px;font-size:12px;line-height:12px;color:#000;transform:scaleX(0.8960);">2015.12.05 01:55</span>
<span style="left:136.50px;top:273px;font-size:12px;line-height:12px;color:#000;transform:scaleX(0.8178);">Oprettet</span>
<span style="left:286.00px;top:273px;font-size:12px;line-height:12px;color:#000;transform:scaleX(0.8848);">Admin</span>
<span style="left:48.50px;top:773px;font-size:12px;line-height:12px;color:#8a8a8a;transform:scaleX(0.9544);">Anvend</span>
<span style="left:143.90px;top:773px;font-size:12px;line-height:12px;color:#8a8a8a;transform:scaleX(0.9040);">Egenskaber</span>
<span style="left:254.00px;top:773px;font-size:12px;line-height:12px;color:#000;transform:scaleX(0.8449);">Tilføje</span>
<span style="left:351.30px;top:773px;font-size:12px;line-height:12px;color:#8a8a8a;transform:scaleX(0.8475);">Fjern</span>
<span style="left:455.00px;top:773px;font-size:12px;line-height:12px;color:#000;transform:scaleX(0.8247);">Afslut</span>
<span style="left:549.00px;top:773px;font-size:12px;line-height:12px;color:#000;transform:scaleX(0.8652);">Hjælp</span>
<span style="left:4.00px;top:804px;font-size:12px;line-height:12px;color:#000;transform:scaleX(0.9370);">Klar</span>
<span style="left:511.00px;top:804px;font-size:12px;line-height:12px;color:#000;transform:scaleX(0.9325);">DESKTOP-789HANE : COM(*)</span>
<span style="left:674.40px;top:804px;font-size:12px;line-height:12px;color:#000;transform:scaleX(0.9159);">TCP-Port:6001</span>
<span style="left:784.00px;top:804px;font-size:12px;line-height:12px;color:#000;transform:scaleX(1.0498);">Admin</span>
<span style="left:850.00px;top:804px;font-size:12px;line-height:12px;color:#000;transform:scaleX(0.9879);">NUM</span>
</body></html>
